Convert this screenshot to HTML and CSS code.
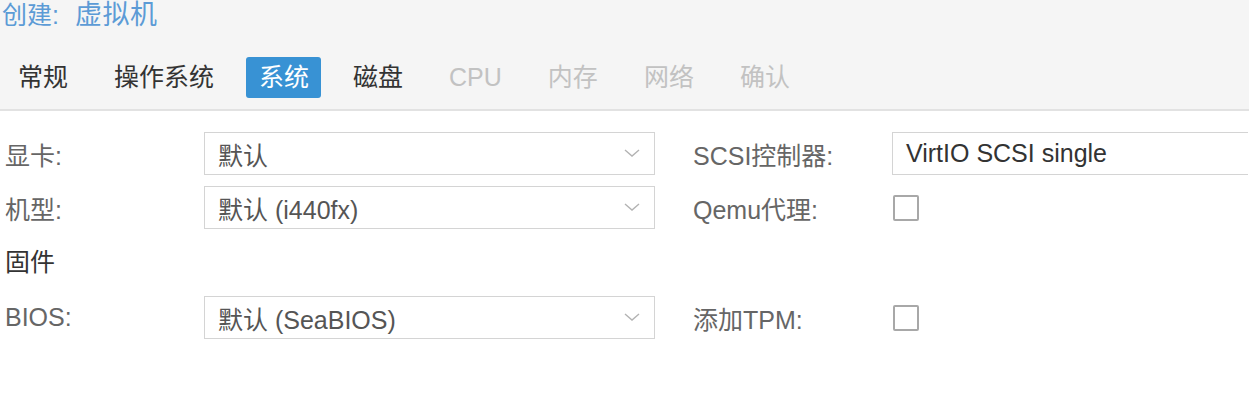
FILE: index.html
```html
<!DOCTYPE html>
<html lang="zh-CN">
<head>
<meta charset="utf-8">
<title>创建: 虚拟机</title>
<link rel="stylesheet" href="styles.css">
</head>
<body>
<div class="header">
  <div class="title">创建: <span class="title-name">虚拟机</span></div>
  <div class="tabs">
    <div class="tab">常规</div>
    <div class="tab">操作系统</div>
    <div class="tab active">系统</div>
    <div class="tab">磁盘</div>
    <div class="tab disabled">CPU</div>
    <div class="tab disabled">内存</div>
    <div class="tab disabled">网络</div>
    <div class="tab disabled">确认</div>
  </div>
</div>
<div class="form">
  <div class="row">
    <div class="group">
      <div class="label">显卡:</div>
      <div class="combo"><span class="value">默认</span><svg class="chev" viewBox="0 0 16 8" width="16" height="8"><path d="M1 1 L8 7 L15 1" fill="none" stroke="#b3b3b3" stroke-width="1.4"/></svg></div>
    </div>
    <div class="group">
      <div class="label">SCSI控制器:</div>
      <div class="combo wide"><span class="value dark">VirtIO SCSI single</span></div>
    </div>
  </div>
  <div class="row">
    <div class="group">
      <div class="label">机型:</div>
      <div class="combo"><span class="value">默认 (i440fx)</span><svg class="chev" viewBox="0 0 16 8" width="16" height="8"><path d="M1 1 L8 7 L15 1" fill="none" stroke="#b3b3b3" stroke-width="1.4"/></svg></div>
    </div>
    <div class="group">
      <div class="label">Qemu代理:</div>
      <div class="check-cell"><span class="checkbox"></span></div>
    </div>
  </div>
  <div class="row section-row">
    <div class="section">固件</div>
  </div>
  <div class="row">
    <div class="group">
      <div class="label">BIOS:</div>
      <div class="combo"><span class="value">默认 (SeaBIOS)</span><svg class="chev" viewBox="0 0 16 8" width="16" height="8"><path d="M1 1 L8 7 L15 1" fill="none" stroke="#b3b3b3" stroke-width="1.4"/></svg></div>
    </div>
    <div class="group">
      <div class="label">添加TPM:</div>
      <div class="check-cell"><span class="checkbox"></span></div>
    </div>
  </div>
</div>
</body>
</html>
```
FILE: styles.css
```css
html, body {
  margin: 0;
  padding: 0;
  background: #ffffff;
  overflow: hidden;
  width: 1249px;
  height: 397px;
}
body {
  font-family: "Liberation Sans", "Noto Sans CJK SC", sans-serif;
  font-size: 25px;
  color: #333;
}
.header {
  background: #f5f5f5;
  height: 109px;
  border-bottom: 2px solid #e2e2e2;
}
.title {
  padding: 0 0 0 2px;
  height: 30px;
  line-height: 30px;
  font-size: 25px;
  color: #5c9bd6;
  white-space: nowrap;
  word-spacing: 9px;
}
.title-name {
  font-size: 27px;
  letter-spacing: 0.5px;
}
.tabs {
  display: flex;
  gap: 18px;
  margin-top: 27px;
  padding-left: 4px;
}
.tab {
  height: 41px;
  line-height: 41px;
  padding: 0 14px;
  border-radius: 3px;
  color: #333;
  white-space: nowrap;
}
.tab.active {
  background: #3892d4;
  color: #ffffff;
  padding: 0 12px 0 13px;
}
.tab.disabled {
  color: #c2c2c2;
}
.form {
  padding: 21px 0 0 5px;
}
.row {
  display: flex;
  gap: 38px;
  height: 43px;
  margin-bottom: 11px;
  align-items: center;
}
.section-row {
  height: 45px;
}
.group {
  display: flex;
  align-items: center;
  height: 43px;
}
.label {
  width: 199px;
  color: #666;
  white-space: nowrap;
}
.combo {
  width: 451px;
  height: 43px;
  box-sizing: border-box;
  border: 1px solid #d4d4d4;
  display: flex;
  align-items: center;
  justify-content: space-between;
  padding: 0 14px 0 13px;
  background: #fff;
}
.combo.wide {
  width: 356px;
  border-right: 0;
}
.value {
  color: #555;
  white-space: nowrap;
}
.value.dark {
  color: #333;
}
.chev {
  display: block;
  margin-top: -2px;
}
.check-cell {
  width: 356px;
  height: 43px;
  display: flex;
  align-items: center;
  padding-left: 1px;
  box-sizing: border-box;
}
.checkbox {
  display: block;
  width: 26px;
  height: 26px;
  box-sizing: border-box;
  border: 2px solid #a8a8a8;
  border-radius: 2px;
  background: #fff;
}
.section {
  color: #333;
  height: 45px;
  line-height: 45px;
}
```
